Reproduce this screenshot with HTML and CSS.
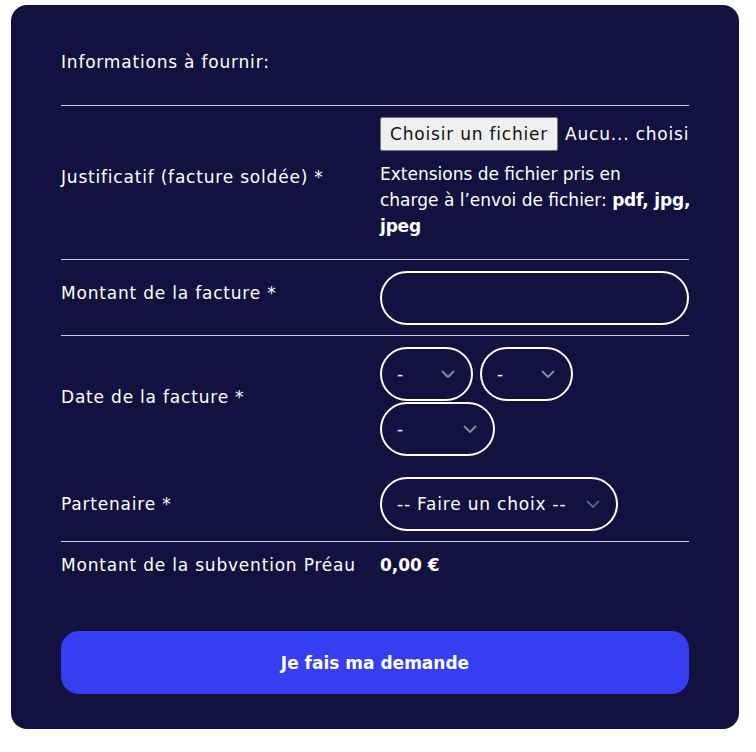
FILE: index.html
```html
<!DOCTYPE html>
<html lang="fr">
<head>
<meta charset="utf-8">
<title>Demande de subvention</title>
<link rel="stylesheet" href="styles.css">
</head>
<body>
<div class="page">
  <form class="card">
    <div class="heading">Informations à fournir:</div>

    <div class="row row-file">
      <div class="label label-file">Justificatif (facture soldée) *</div>
      <div class="value">
        <div class="file">
          <button type="button" class="file-btn">Choisir un fichier</button>
          <span class="file-name">Aucu... choisi</span>
        </div>
        <p class="help">Extensions de fichier pris en<br>charge à l’envoi de fichier: <b>pdf, jpg,<br>jpeg</b></p>
      </div>
    </div>

    <div class="row">
      <div class="label label-up">Montant de la facture *</div>
      <div class="value">
        <div class="input"></div>
      </div>
    </div>

    <div class="row row-open">
      <div class="label label-up">Date de la facture *</div>
      <div class="value selects">
        <div class="select w-day"><span>-</span><svg class="chev" width="14" height="8" viewBox="0 0 14 8"><path d="M1 1l6 6 6-6" fill="none" stroke="#8a8a99" stroke-width="2"/></svg></div>
        <div class="select w-day"><span>-</span><svg class="chev" width="14" height="8" viewBox="0 0 14 8"><path d="M1 1l6 6 6-6" fill="none" stroke="#8a8a99" stroke-width="2"/></svg></div>
        <div class="select w-year"><span>-</span><svg class="chev" width="14" height="8" viewBox="0 0 14 8"><path d="M1 1l6 6 6-6" fill="none" stroke="#8a8a99" stroke-width="2"/></svg></div>
      </div>
    </div>

    <div class="row row-partner">
      <div class="label">Partenaire *</div>
      <div class="value">
        <div class="select w-partner"><span>-- Faire un choix --</span><svg class="chev" width="14" height="8" viewBox="0 0 14 8"><path d="M1 1l6 6 6-6" fill="none" stroke="#6f6f80" stroke-width="1.6"/></svg></div>
      </div>
    </div>

    <div class="row row-last">
      <div class="label">Montant de la subvention Préau</div>
      <div class="value amount">0,00 €</div>
    </div>

    <button type="button" class="submit">Je fais ma demande</button>
  </form>
</div>
</body>
</html>
```

FILE: styles.css
```css
* { box-sizing: border-box; }

body {
  margin: 0;
  background: #ffffff;
  font-family: "DejaVu Sans", "Open Sans", sans-serif;
  font-size: 17px;
  letter-spacing: 0.8px;
  line-height: 24px;
  color: #ffffff;
}

.page {
  padding: 5px 17px 0 11px;
}

.card {
  background: #13113f;
  border-radius: 16px;
  padding: 45px 50px 35px;
  display: flex;
  flex-direction: column;
}

.heading {
  padding-bottom: 31px;
  border-bottom: 1px solid #cfcde2;
}

.row {
  display: grid;
  grid-template-columns: 319px 309px;
  align-items: center;
  padding: 11px 0 10px;
  border-bottom: 1px solid #cfcde2;
}

.row-open { border-bottom: none; }
.row-last { border-bottom: none; }

.label-up { padding-bottom: 10px; }
.label-file { padding-bottom: 12px; }

.file {
  display: flex;
  align-items: center;
  gap: 7px;
  height: 34px;
}

.file-btn {
  height: 34px;
  padding: 0 9px;
  font-family: inherit;
  font-size: 17px;
  letter-spacing: 0.8px;
  color: #111;
  background: #efefef;
  border: 1px solid #767676;
  border-radius: 2px;
  white-space: nowrap;
}

.file-name { white-space: nowrap; }

.help {
  margin: 10px 0 10px;
  line-height: 26px;
  letter-spacing: 0;
  white-space: nowrap;
}

.help b { font-weight: 700; letter-spacing: -0.2px; }

.input {
  height: 54px;
  border: 2px solid #ffffff;
  border-radius: 27px;
}

.selects {
  display: flex;
  flex-wrap: wrap;
  column-gap: 7px;
  row-gap: 1px;
}

.select {
  height: 54px;
  border: 2px solid #ffffff;
  border-radius: 27px;
  display: flex;
  align-items: center;
  justify-content: space-between;
  padding: 0 16px 0 15px;
  white-space: nowrap;
}

.w-day { width: 93px; }
.w-year { width: 115px; }
.w-partner { width: 238px; }

.chev { flex: none; }

.amount { font-weight: 700; letter-spacing: 0; }

.submit {
  margin-top: 44px;
  height: 63px;
  border: none;
  border-radius: 18px;
  background: #353ef0;
  color: #ffffff;
  font-family: inherit;
  font-size: 17px;
  font-weight: 700;
  letter-spacing: 0;
}
```
